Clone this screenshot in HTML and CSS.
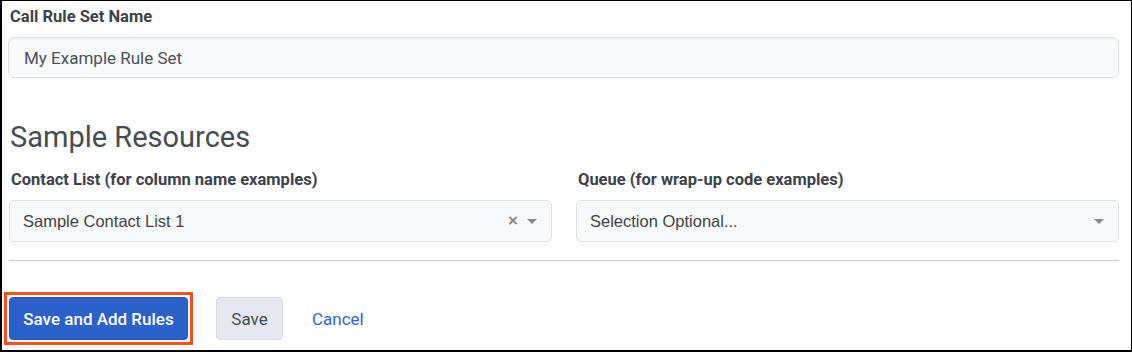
FILE: index.html
```html
<!DOCTYPE html>
<html lang="en">
<head>
    <meta charset="UTF-8">
    <title>Call Rule Set</title>
    <link rel="stylesheet" href="styles.css">
</head>
<body>
    <div class="page">
        <label class="field-label">Call Rule Set Name</label>
        <input type="text" class="text-input" value="My Example Rule Set">

        <h2 class="section-title">Sample Resources</h2>

        <div class="select-row">
            <div class="select-col">
                <label class="field-label">Contact List (for column name examples)</label>
                <div class="select-box">
                    <span class="select-value">Sample Contact List 1</span>
                    <span class="select-clear">&times;</span>
                    <span class="select-arrow"></span>
                </div>
            </div>
            <div class="select-col">
                <label class="field-label">Queue (for wrap-up code examples)</label>
                <div class="select-box">
                    <span class="select-value">Selection Optional...</span>
                    <span class="select-arrow"></span>
                </div>
            </div>
        </div>

        <hr class="divider">

        <div class="actions">
            <span class="highlight">
                <button class="btn btn-primary">Save and Add Rules</button>
            </span>
            <button class="btn btn-default">Save</button>
            <a href="#" class="btn-link">Cancel</a>
        </div>
    </div>
</body>
</html>
```

FILE: styles.css
```css
/* page styles */
body {
    margin: 0;
    font-family: Roboto, 'Liberation Sans', sans-serif;
    background: white;
}

.page {
    box-sizing: border-box;
    width: 1132px;
    height: 352px;
    border: 1px solid #000;
    border-left-width: 2px;
    border-bottom-width: 2px;
    padding: 6px 12px 0 6px;
}

.field-label {
    display: block;
    margin-left: 2px;
    font-size: 16.5px;
    line-height: 20px;
    font-weight: bold;
    color: #3d4249;
}

.text-input {
    display: block;
    box-sizing: border-box;
    width: 100%;
    height: 41px;
    margin-top: 10px;
    padding: 0 15px;
    border: 1px solid #dde2e8;
    border-radius: 6px;
    background-color: #f9fafb;
    box-shadow: inset 0 1px 2px rgba(0, 0, 0, 0.06);
    font-family: Roboto, sans-serif;
    font-size: 17px;
    color: #4b5058;
}

.section-title {
    margin: 42px 0 16px 2px;
    font-size: 29px;
    line-height: 34px;
    font-weight: normal;
    color: #474c53;
}

.select-row {
    display: flex;
    gap: 24px;
    margin-left: 1px;
}

.select-col {
    flex: 1;
}

.select-box {
    display: flex;
    align-items: center;
    box-sizing: border-box;
    height: 42px;
    margin-top: 10px;
    padding: 0 14px 0 13px;
    border: 1px solid #dde2e8;
    border-radius: 5px;
    background-color: #f8f9fb;
    font-family: 'Liberation Sans', Arial, sans-serif;
    font-size: 16.5px;
    color: #444;
}

.select-value {
    flex: 1;
}

.select-clear {
    margin-right: 9px;
    font-size: 17px;
    font-weight: bold;
    color: #888;
}

.select-arrow {
    width: 0;
    height: 0;
    border-left: 5px solid transparent;
    border-right: 5px solid transparent;
    border-top: 5px solid #888;
}

.divider {
    margin: 18px 0 0 1px;
    border: none;
    border-top: 1px solid #c4c4c4;
}

.actions {
    display: flex;
    align-items: center;
    margin-top: 31px;
    margin-left: -4px;
}

.highlight {
    display: inline-flex;
    padding: 2px;
    border: 3px solid #f4511e;
}

.btn {
    height: 43px;
    padding: 0 10px;
    border-radius: 4px;
    font-family: Roboto, sans-serif;
    font-size: 17px;
    cursor: pointer;
}

.btn-primary {
    width: 179px;
    border: 1px solid #2558b8;
    background-color: #2b61c9;
    color: white;
    font-weight: 500;
}

.btn-default {
    width: 67px;
    margin-left: 23px;
    border: 1px solid #d6dbe2;
    background-color: #e5e9ef;
    color: #474c53;
}

.btn-link {
    margin-left: 29px;
    font-size: 17px;
    color: #2e66cc;
    text-decoration: none;
}
```
